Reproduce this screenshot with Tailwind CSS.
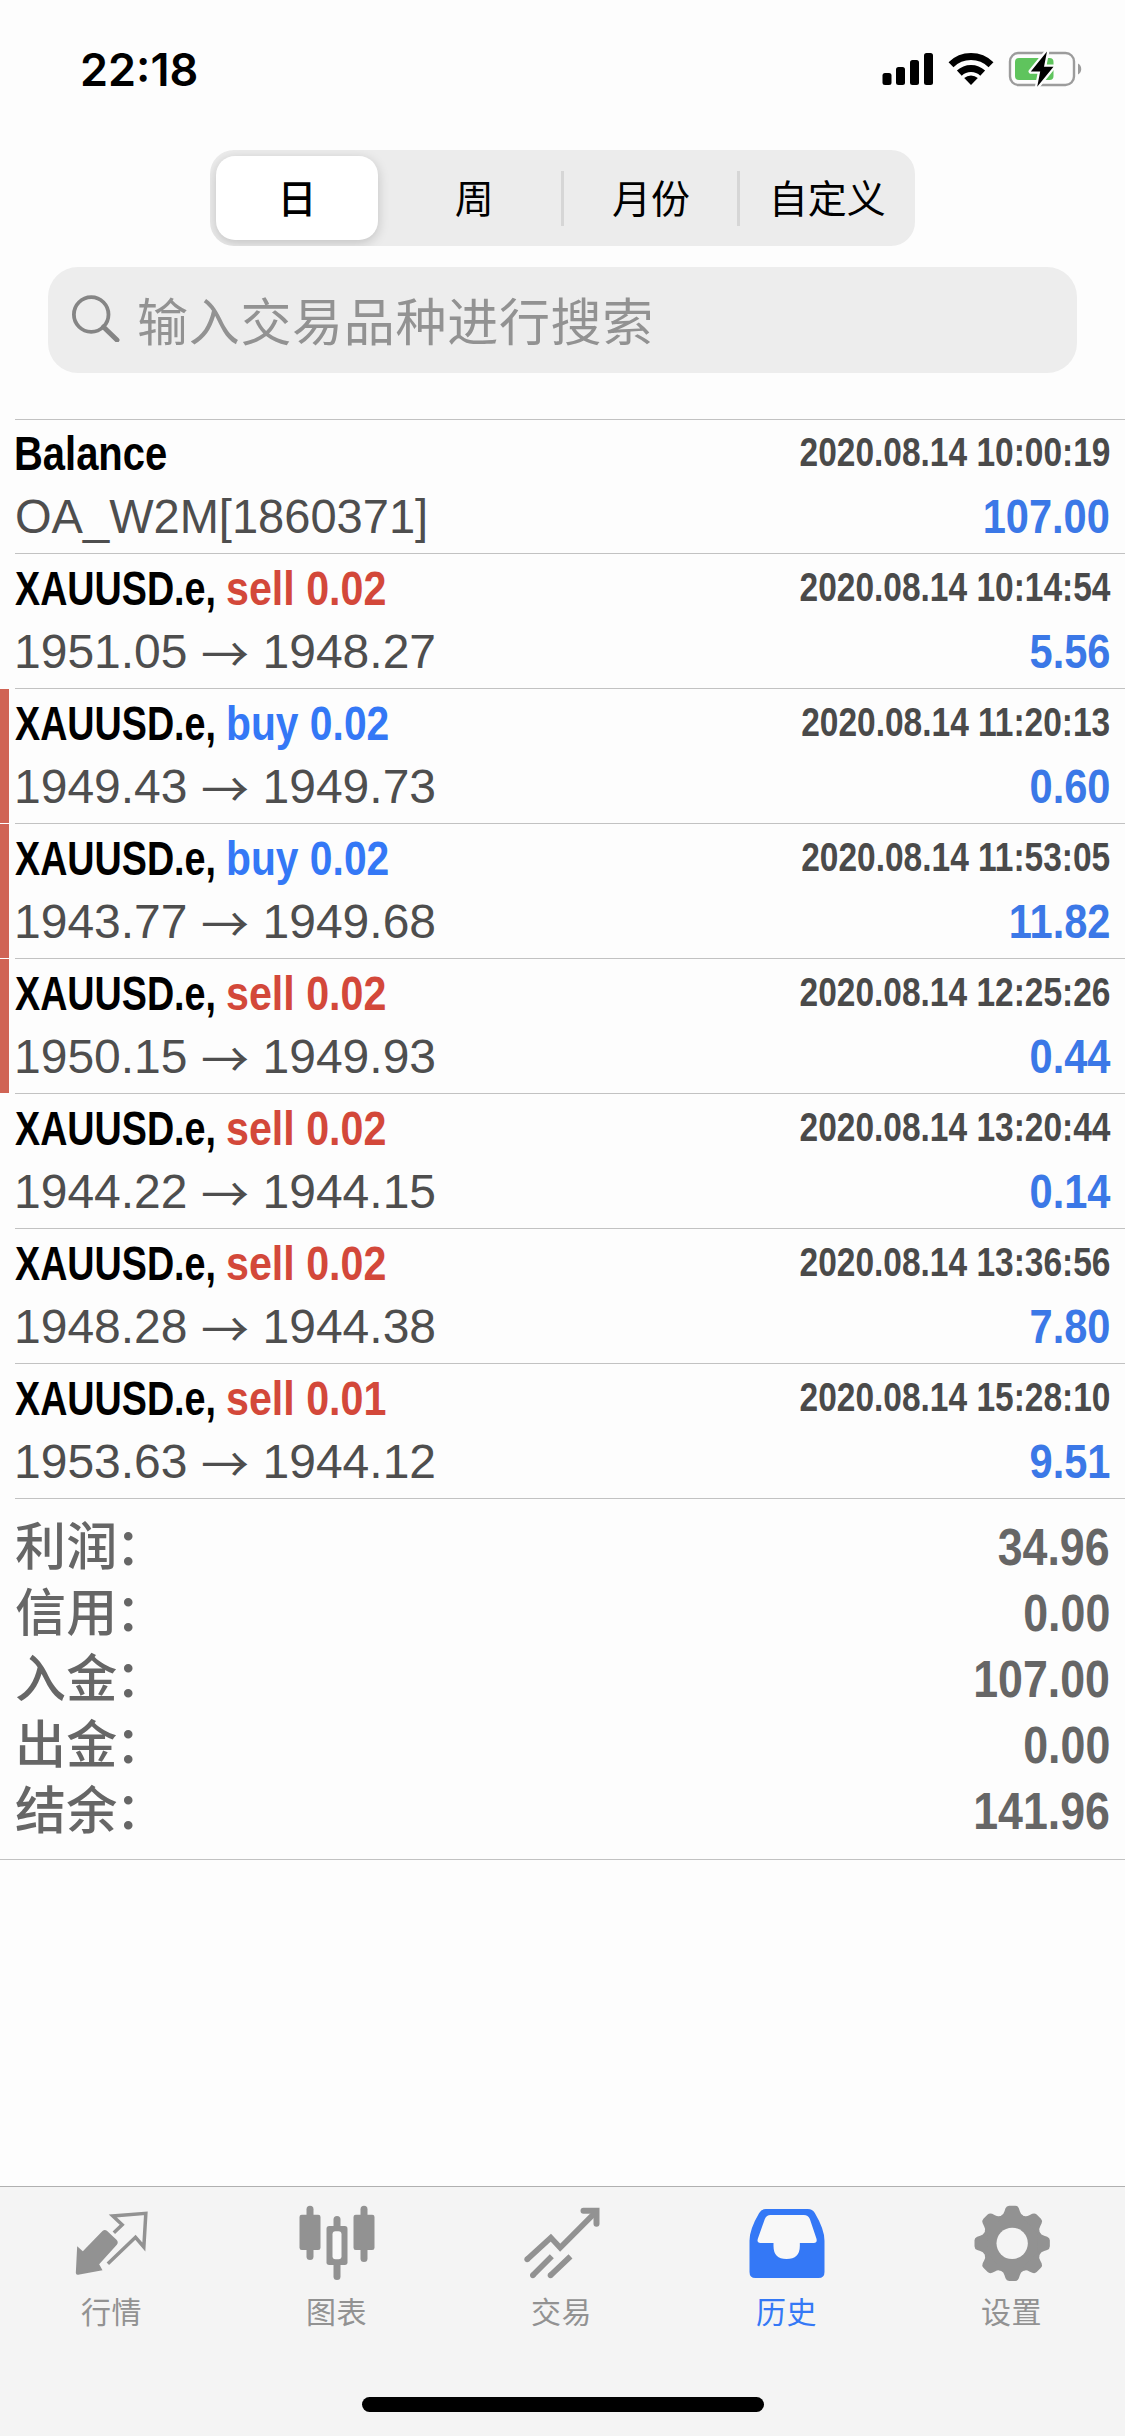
<!DOCTYPE html>
<html lang="zh-CN">
<head>
<meta charset="utf-8">
<title>历史</title>
<script src="https://cdn.jsdelivr.net/npm/@tailwindcss/browser@4"></script>
</head>
<body class="bg-[#fdfdfd] font-['Liberation_Sans','Noto_Sans_CJK_SC',sans-serif] text-black">
<div class="flex h-[2436px] w-[1125px] flex-col overflow-hidden">

  <!-- status bar -->
  <header class="flex h-[138px] items-center justify-between pl-[80px] pr-[43px]">
    <div class="font-['Inter',sans-serif] text-[45px] font-semibold leading-none">22:18</div>
    <svg class="h-[40px] w-[200px]" viewBox="882 49 200 40">
      <g fill="#000">
        <rect x="882.5" y="73" width="9" height="12" rx="2.5"/>
        <rect x="896" y="67" width="9" height="18" rx="2.5"/>
        <rect x="910" y="60" width="9" height="25" rx="2.5"/>
        <rect x="924" y="53" width="9" height="32" rx="2.5"/>
        <path d="M971 85l-6.8-6.900a10 10 0 0 1 13.600 0z"/>
      </g>
      <g fill="none" stroke="#000" stroke-width="7">
        <path d="M959.300 73.100a17 17 0 0 1 23.400 0"/>
        <path d="M951 64.700a28.500 28.500 0 0 1 40 0"/>
      </g>
      <rect x="1010" y="53" width="64" height="32" rx="8.500" fill="none" stroke="#9c9c9c" stroke-width="2.400"/>
      <path d="M1078 63.500a6.300 6.300 0 0 1 0 11z" fill="#9c9c9c"/>
      <rect x="1015" y="58" width="38.500" height="22" rx="4" fill="#5fc45d"/>
      <path d="M1047 51.500l-16.200 20h9.400l-3 15.300 16.300-20h-9.500z" fill="#000" stroke="#fdfdfd" stroke-width="4.500" paint-order="stroke" stroke-linejoin="round"/>
    </svg>
  </header>

  <!-- period selector -->
  <nav class="ml-[210px] mt-3 grid h-24 w-[705px] grid-cols-4 overflow-hidden rounded-[24px] bg-[#ececec] font-['Noto_Sans_CJK_SC',sans-serif] text-[39px] leading-none">
    <div class="my-1.5 ml-1.5 mr-2 flex items-center justify-center rounded-[19px] bg-white pb-1 font-medium shadow-[0_3px_12px_rgba(0,0,0,0.18)]"><span>日</span></div>
    <div class="flex items-center justify-center pb-1"><span>周</span></div>
    <div class="flex items-center"><i class="-ml-0.5 h-[55px] w-[3px] bg-[#d6d6d6]"></i><span class="flex-1 pb-1 text-center">月份</span></div>
    <div class="flex items-center"><i class="-ml-0.5 h-[55px] w-[3px] bg-[#d6d6d6]"></i><span class="flex-1 pb-1 text-center">自定义</span></div>
  </nav>

  <!-- search field -->
  <div class="ml-12 mt-[21px] flex h-[106px] w-[1029px] items-center rounded-[30px] bg-[#ededed] pl-6 text-[#929292]">
    <svg class="-mt-1 h-12 w-12" viewBox="0 0 48 48" fill="none" stroke="#858585">
      <circle cx="19.200" cy="20.500" r="17.300" stroke-width="3.800"/>
      <path d="M31.500 33L45 46" stroke-width="5" stroke-linecap="round"/>
    </svg>
    <span class="ml-[17px] pb-0.5 font-['Noto_Sans_CJK_SC',sans-serif] text-[51px] leading-none tracking-[0.7px]">输入交易品种进行搜索</span>
  </div>

  <!-- deals -->
  <main id="deals" class="mt-[46px] shrink-0"></main>

  <!-- totals -->
  <section id="totals" class="flex shrink-0 flex-col border-b border-[#c2c2c2] pb-3.5 pl-[15px] pr-[15px] pt-4 text-[51px] leading-[66px] text-[#666]"></section>

  <!-- tab bar -->
  <footer class="mt-auto flex h-[250px] shrink-0 flex-col items-center border-t border-[#b0b0b0] bg-[#f4f4f4]">
    <div class="grid h-[210px] w-full grid-cols-5 pt-[17px] font-['Noto_Sans_CJK_SC',sans-serif] text-[30px] leading-[36px] tracking-[0.6px] text-[#929292]">
      <div class="flex flex-col items-center gap-2.5">
        <svg class="size-[78px]" viewBox="220.500 102 234 234">
          <path d="M230 229L247 244L306 183Q313 177 320 183L348 209Q355 217 349 224L296 283L306 301L233 314Q226 315 226 308Z" fill="#929292"/>
          <path d="M340 188L365 164L337 138L436 130L430 231L405 202L322 281" fill="none" stroke="#929292" stroke-width="10.500" stroke-linejoin="miter"/>
        </svg>
        <span class="-ml-0.5">行情</span>
      </div>
      <div class="flex flex-col items-center gap-2.5">
        <svg class="size-[78px]" viewBox="895.500 102 234 234" fill="#929292">
          <rect x="918" y="107" width="21" height="163" rx="10.500"/><rect x="897" y="134" width="63" height="106" rx="7"/>
          <rect x="1080" y="107" width="21" height="169" rx="10.500"/><rect x="1059" y="134" width="63" height="106" rx="7"/>
          <rect x="999" y="138" width="21" height="192" rx="10.500"/><rect x="978" y="168" width="63" height="117" rx="8"/>
          <rect x="996" y="184" width="27" height="84" rx="9" fill="#f8f8f8"/>
        </svg>
        <span class="-ml-0.5">图表</span>
      </div>
      <div class="flex flex-col items-center gap-2.5">
        <svg class="size-[78px]" viewBox="310.500 102 234 234" fill="none" stroke="#929292" stroke-width="17">
          <path d="M320 268L391 203L419 233L528 124" stroke-linejoin="miter"/>
          <path d="M489 122H528V161" stroke-width="18" stroke-linecap="round"/>
          <path d="M337 316L394 259M390 316L450 259"/>
          <g fill="#929292" stroke="none"><circle cx="320" cy="268" r="8.500"/><circle cx="337" cy="316" r="8.500"/><circle cx="390" cy="316" r="8.500"/></g>
        </svg>
        <span class="-ml-0.5">交易</span>
      </div>
      <div class="flex flex-col items-center gap-2.5 text-[#3478f6]">
        <svg class="size-[78px]" viewBox="145.500 102 234 234">
          <path d="M196 117H322Q336 117 343 129Q372 178 372 212V306Q372 324 354 324H165Q147 324 147 306V212Q147 178 176 129Q183 117 196 117Z" fill="#3478f6"/>
          <path d="M210 135H310Q323 135 328 147L348 206Q351 219 340 219H298V228Q298 267 258 267Q219 267 219 228V219H180Q168 219 172 206L193 147Q198 135 210 135Z" fill="#f8f8f8"/>
        </svg>
        <span class="-ml-0.5">历史</span>
      </div>
      <div class="flex flex-col items-center gap-2.5">
        <svg class="size-[78px]" viewBox="820.500 102 234 234">
          <g fill="#929292">
            <circle cx="935" cy="220" r="88"/>
            <g id="teeth"></g>
          </g>
          <circle cx="935" cy="220" r="47" fill="#f4f4f4"/>
        </svg>
        <span class="-ml-0.5">设置</span>
      </div>
    </div>
    <div class="h-[15px] w-[402px] rounded-full bg-black"></div>
  </footer>
</div>

<script>
  const deals = [
    ['Balance', '', '2020.08.14 10:00:19', 'OA_W2M[1860371]', '', '107.00', 0],
    ['XAUUSD.e,', 'sell 0.02', '2020.08.14 10:14:54', '1951.05', '1948.27', '5.56', 0],
    ['XAUUSD.e,', 'buy 0.02', '2020.08.14 11:20:13', '1949.43', '1949.73', '0.60', 1],
    ['XAUUSD.e,', 'buy 0.02', '2020.08.14 11:53:05', '1943.77', '1949.68', '11.82', 1],
    ['XAUUSD.e,', 'sell 0.02', '2020.08.14 12:25:26', '1950.15', '1949.93', '0.44', 1],
    ['XAUUSD.e,', 'sell 0.02', '2020.08.14 13:20:44', '1944.22', '1944.15', '0.14', 0],
    ['XAUUSD.e,', 'sell 0.02', '2020.08.14 13:36:56', '1948.28', '1944.38', '7.80', 0],
    ['XAUUSD.e,', 'sell 0.01', '2020.08.14 15:28:10', '1953.63', '1944.12', '9.51', 0],
  ];
  document.getElementById('deals').innerHTML = deals.map(([name, side, time, open, close, profit, mark], i) => `
    <article class="flex ${i ? 'h-[135px]' : 'h-[134px]'}">
      <i class="mt-px w-[9px] shrink-0 ${mark ? 'bg-[#d06455]' : ''}"></i>
      <div class="ml-[6px] flex flex-1 flex-col gap-1.5 border-t border-[#c2c2c2] pr-[15px] ${i ? 'pt-1.5' : 'pt-[5px]'} text-[48px] leading-[57px]">
        <div class="flex h-[57px] items-start font-bold">
          <div class="w-[211px]"><span class="inline-block origin-left whitespace-nowrap ${side ? 'scale-x-[0.785]' : '-ml-px scale-x-[0.832]'}">${name}</span></div>
          <span class="origin-left whitespace-nowrap ${side[0] === 's' ? 'scale-x-[0.858] text-[#d3483a]' : 'scale-x-[0.85] text-[#3478f6]'}">${side}</span>
          <span class="ml-auto origin-right scale-x-[0.837] whitespace-nowrap text-[40px] leading-[54px] text-[#4a4a4a]">${time}</span>
        </div>
        <div class="flex h-[57px] items-start text-[#4e4e4e]">
          <span class="${close ? '-ml-px' : 'origin-left scale-x-[0.98]'}">${open}</span>
          ${close ? `<span class="w-[75px] text-center font-['Noto_Sans_CJK_SC',sans-serif]">→</span><span>${close}</span>` : ''}
          <span class="ml-auto origin-right scale-x-[0.866] font-bold text-[#3b78e7]">${profit}</span>
        </div>
      </div>
    </article>`).join('') + '<div class="ml-[15px] h-px bg-[#c2c2c2]"></div>';

  const totals = [['利润', '34.96'], ['信用', '0.00'], ['入金', '107.00'], ['出金', '0.00'], ['结余', '141.96']];
  document.getElementById('totals').innerHTML = totals.map(([k, v]) => `
    <div class="flex h-[66px] items-start justify-between">
      <span class="font-medium tracking-[0.3px]">${k}<span class="-ml-0.5">：</span></span>
      <span class="origin-right scale-x-[0.877] font-bold">${v}</span>
    </div>`).join('');

  document.getElementById('teeth').innerHTML = [0, 45, 90, 135, 180, 225, 270, 315].map(a =>
    `<path transform="rotate(${a} 935 220)" d="M895 145L903 136Q909 134 912 124L915 115Q918 107 926 107H944Q952 107 955 115L958 124Q961 134 967 136L975 145Z"/>`).join('');
</script>
</body>
</html>
